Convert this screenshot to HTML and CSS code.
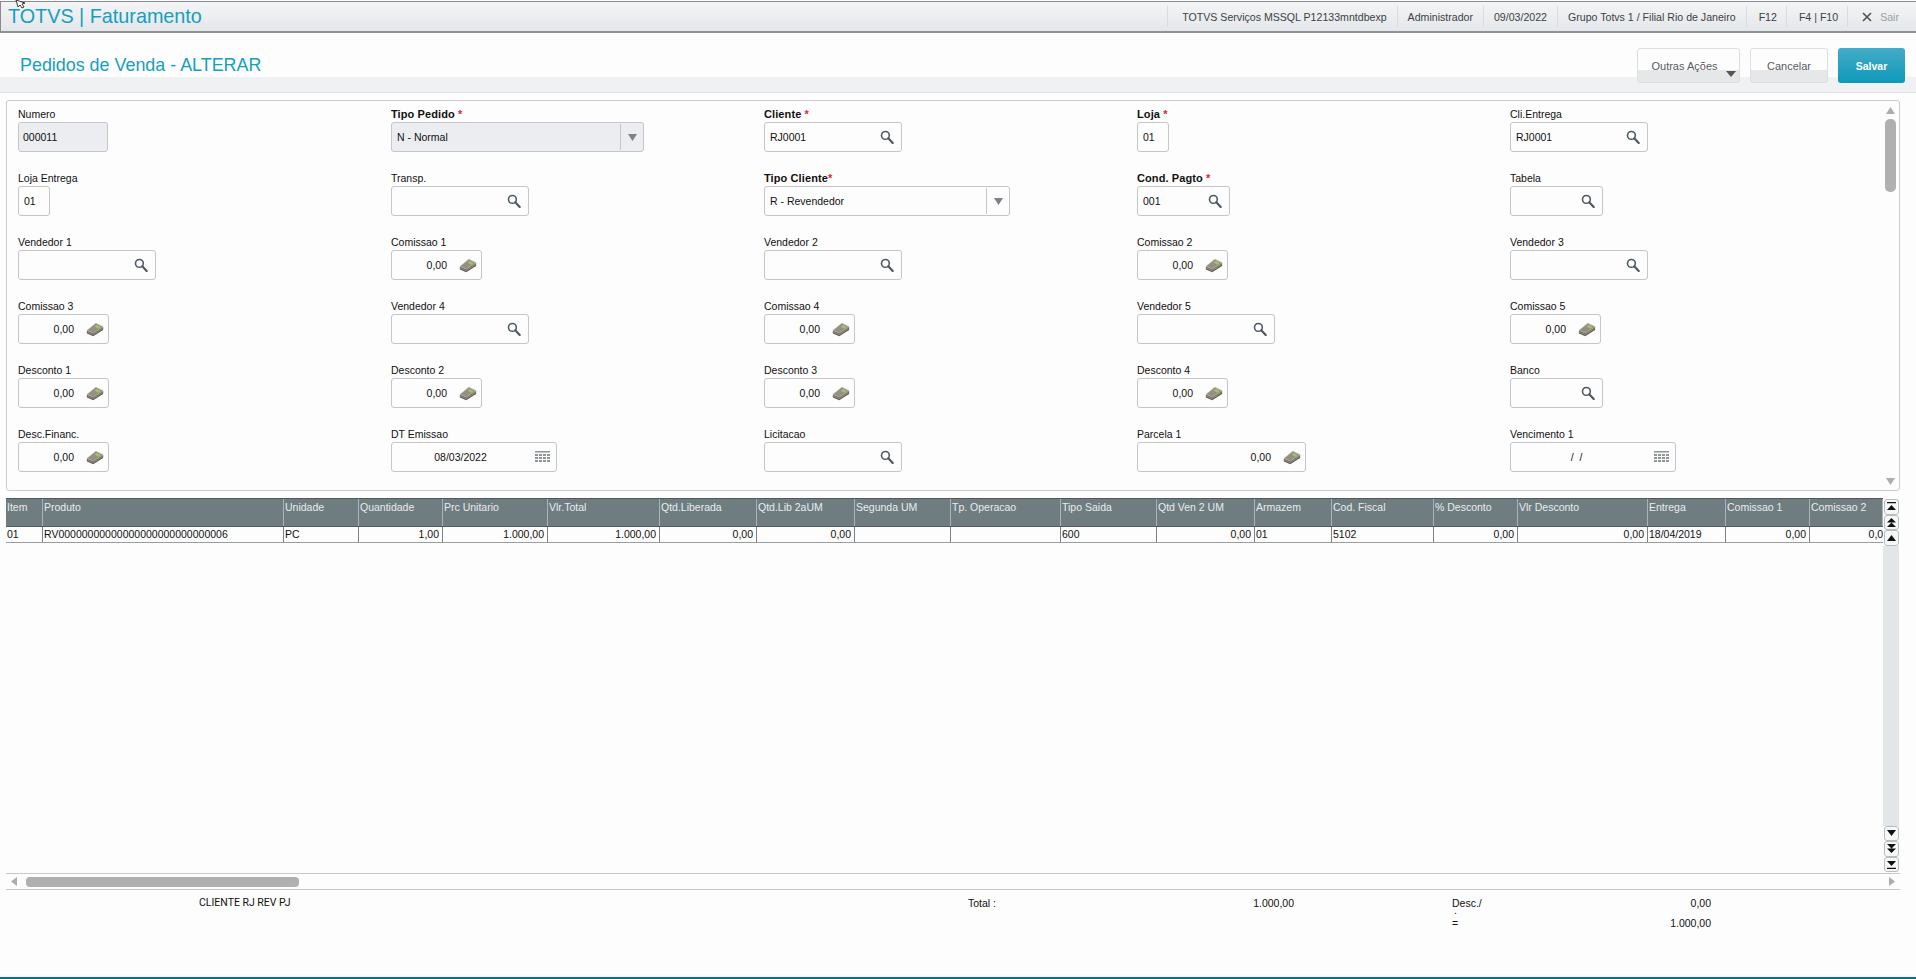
FILE: index.html
```html
<!DOCTYPE html>
<html lang="pt-BR">
<head>
<meta charset="utf-8">
<title>TOTVS | Faturamento</title>
<link rel="stylesheet" href="styles.css">
</head>
<body>
<svg class="defs" width="0" height="0" aria-hidden="true">
  <symbol id="i-search" viewBox="0 0 14 14">
    <circle cx="5.4" cy="5.4" r="3.9" fill="none" stroke="#4f5a66" stroke-width="1.6"/>
    <path d="M8.3 8.3l4.4 4.6" stroke="#4f5a66" stroke-width="2.2" stroke-linecap="round"/>
  </symbol>
  <symbol id="i-money" viewBox="0 0 20 16">
    <path d="M1 9L11 1l8 4v3.500L8 15.500 1 12.500z" fill="#5f5b53"/>
    <path d="M1 9L11 1l8 4L8 12z" fill="#968e80" stroke="#d2cdc2" stroke-width=".7"/>
    <path d="M9.500 4.800L12 2.800l4.200 2.200-2.500 2.100z" fill="#9cc46a"/>
    <path d="M1.500 11l6.500 2.700L18.500 7" fill="none" stroke="#a8a296" stroke-width=".8"/>
  </symbol>
  <symbol id="i-cal" viewBox="0 0 15 13">
    <path d="M0 0h15v1.500H0z" fill="#8f959b"/>
    <path d="M0 3h3v2H0zM4 3h3v2H4zM8 3h3v2H8zM12 3h3v2h-3zM0 6h3v2H0zM4 6h3v2H4zM8 6h3v2H8zM12 6h3v2h-3zM0 9h3v2H0zM4 9h3v2H4zM8 9h3v2H8zM12 9h3v2h-3z" fill="#8f959b"/>
  </symbol>
</svg>

<svg class="cursor" width="12" height="9" viewBox="0 0 12 9" aria-hidden="true"><path d="M1 0l2 7 2-2 2 3 2-1-2-3 3-1z" fill="#fff" stroke="#222" stroke-width=".9"/></svg>

<header class="topbar">
  <div class="brand">TOTVS | Faturamento</div>
  <nav class="topnav">
    <span class="topitem first">TOTVS Serviços MSSQL P12133mntdbexp</span>
    <span class="topitem">Administrador</span>
    <span class="topitem">09/03/2022</span>
    <span class="topitem">Grupo Totvs 1 / Filial Rio de Janeiro</span>
    <span class="topitem key">F12</span>
    <span class="topitem key">F4 | F10</span>
    <span class="topitem exit"><svg class="x" width="10" height="10" viewBox="0 0 10 10"><path d="M1 1l8 8M9 1L1 9" stroke="#555" stroke-width="1.7"/></svg>Sair</span>
  </nav>
</header>

<section class="titlebar">
  <h1 class="pagetitle">Pedidos de Venda - ALTERAR</h1>
  <div class="actions">
    <button class="btn btn-more">Outras Ações<svg class="caret" width="10" height="6" viewBox="0 0 10 6"><path d="M0 0h10L5 6z" fill="#555"/></svg></button>
    <button class="btn btn-cancel">Cancelar</button>
    <button class="btn btn-save">Salvar</button>
  </div>
</section>

<section class="panel">
  <div class="form">
    <div class="field"><span class="lbl">Numero</span><div class="box w-ro ro">000011</div></div>
    <div class="field"><span class="lbl req">Tipo Pedido <i>*</i></span><div class="box w-combo ro">N - Normal<span class="combo"><svg width="9" height="7" viewBox="0 0 9 7"><path d="M0 0h9L4.500 7z" fill="#7c8288"/></svg></span></div></div>
    <div class="field"><span class="lbl req">Cliente <i>*</i></span><div class="box w-l">RJ0001<svg class="ic-s"><use href="#i-search"/></svg></div></div>
    <div class="field"><span class="lbl req">Loja <i>*</i></span><div class="box w-xs">01</div></div>
    <div class="field"><span class="lbl">Cli.Entrega</span><div class="box w-l">RJ0001<svg class="ic-s"><use href="#i-search"/></svg></div></div>

    <div class="field"><span class="lbl">Loja Entrega</span><div class="box w-xs">01</div></div>
    <div class="field"><span class="lbl">Transp.</span><div class="box w-l"><svg class="ic-s"><use href="#i-search"/></svg></div></div>
    <div class="field"><span class="lbl req">Tipo Cliente<i>*</i></span><div class="box w-combo2">R - Revendedor<span class="combo"><svg width="9" height="7" viewBox="0 0 9 7"><path d="M0 0h9L4.500 7z" fill="#7c8288"/></svg></span></div></div>
    <div class="field"><span class="lbl req">Cond. Pagto <i>*</i></span><div class="box w-m">001<svg class="ic-s"><use href="#i-search"/></svg></div></div>
    <div class="field"><span class="lbl">Tabela</span><div class="box w-m"><svg class="ic-s"><use href="#i-search"/></svg></div></div>

    <div class="field"><span class="lbl">Vendedor 1</span><div class="box w-l"><svg class="ic-s"><use href="#i-search"/></svg></div></div>
    <div class="field"><span class="lbl">Comissao 1</span><div class="box w-s num">0,00<svg class="ic-m"><use href="#i-money"/></svg></div></div>
    <div class="field"><span class="lbl">Vendedor 2</span><div class="box w-l"><svg class="ic-s"><use href="#i-search"/></svg></div></div>
    <div class="field"><span class="lbl">Comissao 2</span><div class="box w-s num">0,00<svg class="ic-m"><use href="#i-money"/></svg></div></div>
    <div class="field"><span class="lbl">Vendedor 3</span><div class="box w-l"><svg class="ic-s"><use href="#i-search"/></svg></div></div>

    <div class="field"><span class="lbl">Comissao 3</span><div class="box w-s num">0,00<svg class="ic-m"><use href="#i-money"/></svg></div></div>
    <div class="field"><span class="lbl">Vendedor 4</span><div class="box w-l"><svg class="ic-s"><use href="#i-search"/></svg></div></div>
    <div class="field"><span class="lbl">Comissao 4</span><div class="box w-s num">0,00<svg class="ic-m"><use href="#i-money"/></svg></div></div>
    <div class="field"><span class="lbl">Vendedor 5</span><div class="box w-l"><svg class="ic-s"><use href="#i-search"/></svg></div></div>
    <div class="field"><span class="lbl">Comissao 5</span><div class="box w-s num">0,00<svg class="ic-m"><use href="#i-money"/></svg></div></div>

    <div class="field"><span class="lbl">Desconto 1</span><div class="box w-s num">0,00<svg class="ic-m"><use href="#i-money"/></svg></div></div>
    <div class="field"><span class="lbl">Desconto 2</span><div class="box w-s num">0,00<svg class="ic-m"><use href="#i-money"/></svg></div></div>
    <div class="field"><span class="lbl">Desconto 3</span><div class="box w-s num">0,00<svg class="ic-m"><use href="#i-money"/></svg></div></div>
    <div class="field"><span class="lbl">Desconto 4</span><div class="box w-s num">0,00<svg class="ic-m"><use href="#i-money"/></svg></div></div>
    <div class="field"><span class="lbl">Banco</span><div class="box w-m"><svg class="ic-s"><use href="#i-search"/></svg></div></div>

    <div class="field"><span class="lbl">Desc.Financ.</span><div class="box w-s num">0,00<svg class="ic-m"><use href="#i-money"/></svg></div></div>
    <div class="field"><span class="lbl">DT Emissao</span><div class="box w-date date"><span class="dateval">08/03/2022</span><svg class="ic-c"><use href="#i-cal"/></svg></div></div>
    <div class="field"><span class="lbl">Licitacao</span><div class="box w-l"><svg class="ic-s"><use href="#i-search"/></svg></div></div>
    <div class="field"><span class="lbl">Parcela 1</span><div class="box w-xl num">0,00<svg class="ic-m"><use href="#i-money"/></svg></div></div>
    <div class="field"><span class="lbl">Vencimento 1</span><div class="box w-date date"><span class="dateval">/&nbsp;&nbsp;/&nbsp;&nbsp;</span><svg class="ic-c"><use href="#i-cal"/></svg></div></div>
  </div>
  <div class="panelscroll">
    <svg width="9" height="7" viewBox="0 0 9 7"><path d="M0 7h9L4.500 0z" fill="#a9adb1"/></svg>
    <div class="pthumb"></div>
    <div class="pspace"></div>
    <svg width="9" height="7" viewBox="0 0 9 7"><path d="M0 0h9L4.500 7z" fill="#a9adb1"/></svg>
  </div>
</section>

<section class="gridwrap">
  <div class="gridmain">
    <div class="grow ghead">
      <span>Item</span><span>Produto</span><span>Unidade</span><span>Quantidade</span><span>Prc Unitario</span><span>Vlr.Total</span><span>Qtd.Liberada</span><span>Qtd.Lib 2aUM</span><span>Segunda UM</span><span>Tp. Operacao</span><span>Tipo Saida</span><span>Qtd Ven 2 UM</span><span>Armazem</span><span>Cod. Fiscal</span><span>% Desconto</span><span>Vlr Desconto</span><span>Entrega</span><span>Comissao 1</span><span>Comissao 2</span>
    </div>
    <div class="grow gbody">
      <span>01</span><span>RV00000000000000000000000000006</span><span>PC</span><span class="r">1,00</span><span class="r">1.000,00</span><span class="r">1.000,00</span><span class="r">0,00</span><span class="r">0,00</span><span></span><span></span><span>600</span><span class="r">0,00</span><span>01</span><span>5102</span><span class="r">0,00</span><span class="r">0,00</span><span>18/04/2019</span><span class="r">0,00</span><span class="r clip"><b>0,00</b></span>
    </div>
  </div>
  <div class="gridside">
    <button class="sbtn"><svg width="9" height="9" viewBox="0 0 9 9"><path d="M0 0h9v1.300H0zM0 8h9L4.500 3z" fill="#111"/></svg></button>
    <button class="sbtn"><svg width="9" height="9" viewBox="0 0 9 9"><path d="M0 4.500h9L4.500 0zM0 9h9L4.500 4.500z" fill="#111"/></svg></button>
    <button class="sbtn"><svg width="9" height="6" viewBox="0 0 9 6"><path d="M0 6h9L4.500 0z" fill="#111"/></svg></button>
    <div class="strack"></div>
    <button class="sbtn"><svg width="9" height="6" viewBox="0 0 9 6"><path d="M0 0h9L4.500 6z" fill="#111"/></svg></button>
    <button class="sbtn"><svg width="9" height="9" viewBox="0 0 9 9"><path d="M0 0h9L4.500 4.500zM0 4.500h9L4.500 9z" fill="#111"/></svg></button>
    <button class="sbtn"><svg width="9" height="9" viewBox="0 0 9 9"><path d="M0 1h9L4.500 6zM0 7.700h9V9H0z" fill="#111"/></svg></button>
  </div>
</section>

<div class="hbar">
  <svg class="harrow" width="6" height="9" viewBox="0 0 6 9"><path d="M6 0v9L0 4.500z" fill="#a9adb1"/></svg>
  <div class="hthumb"></div>
  <svg class="harrow-r" width="6" height="9" viewBox="0 0 6 9"><path d="M0 0v9l6-4.500z" fill="#a9adb1"/></svg>
</div>

<footer class="totals">
  <span class="t-name">CLIENTE RJ REV PJ</span>
  <span class="t-label">Total :</span>
  <span class="t-val">1.000,00</span>
  <span class="t-label2">Desc./</span>
  <span class="t-val2">0,00</span>
  <span class="t-dot">.</span>
  <span class="t-eq">=</span>
  <span class="t-val3">1.000,00</span>
</footer>

<div class="bottomline"></div>
</body>
</html>
```

FILE: styles.css
```css
* { box-sizing: border-box; }
html, body { margin: 0; padding: 0; }
body {
  width: 1916px;
  height: 979px;
  overflow: hidden;
  background: #fdfdfd;
  color: #111;
  font-family: "Liberation Sans", Arial, sans-serif;
  font-size: 10.500px;
  display: flex;
  flex-direction: column;
  position: relative;
}
.defs { position: absolute; }
.cursor { position: absolute; left: 15px; top: 0; z-index: 5; }

/* top bar */
.topbar {
  height: 32px;
  margin-top: 1px;
  flex: none;
  display: flex;
  align-items: center;
  justify-content: space-between;
  border: 1px solid #888c90;
  border-right: 0;
  border-bottom: 2px solid #8e9296;
  background: linear-gradient(#f3f4f5, #e4e7ea);
}
.brand {
  font-size: 19.800px;
  color: #149fc0;
  padding-left: 7px;
}
.topnav { display: flex; height: 21px; align-items: stretch; padding-right: 17px; }
.topitem {
  display: flex;
  align-items: center;
  padding: 0 10px;
  border-left: 1px solid #d9dcdf;
  font-size: 10.600px;
  color: #3c4247;
  white-space: nowrap;
}
.topitem.first { padding-left: 14px; }
.topitem.key { padding: 0 9px 0 12px; }
.exit { padding: 0 0 0 14px; color: #9a9fa4; }
.x { margin-right: 8px; }

/* title */
.titlebar {
  height: 60px;
  flex: none;
  display: flex;
  justify-content: space-between;
  background: linear-gradient(#fdfdfd 44px, #f0f1f3 44px);
  border-bottom: 1px solid #dfe1e3;
}
.pagetitle {
  margin: 21px 0 0 20px;
  font-size: 17.900px;
  font-weight: 400;
  color: #149fc0;
  line-height: 22px;
}
.actions { display: flex; gap: 10px; padding: 15px 11px 0 0; align-items: flex-start; }
.btn {
  height: 35px;
  border: 1px solid #dcdee0;
  border-radius: 3px;
  background: linear-gradient(#fdfdfd 21px, #e5e7e9 21px);
  color: #555b60;
  font: 11px "Liberation Sans", Arial, sans-serif;
  padding: 0;
  position: relative;
}
.btn-more { width: 103px; padding-right: 8px; }
.btn-cancel { width: 78px; }
.btn-save {
  width: 67px;
  border: 0;
  background: linear-gradient(#45abc6, #0d99ba);
  color: #fff;
  font-weight: 700;
  font-size: 10.500px;
}
.caret { position: absolute; right: 3px; bottom: 5px; }

/* form */
.panel {
  flex: none;
  width: 1894px;
  height: 391px;
  margin: 7px 0 7px 6px;
  border: 1px solid #c9cbcd;
  border-radius: 3px;
  display: flex;
  justify-content: space-between;
}
.form {
  display: grid;
  grid-template-columns: repeat(5, 373px);
  grid-auto-rows: 64px;
  padding: 5px 0 0 11px;
}
.field { display: flex; flex-direction: column; }
.lbl { height: 16px; line-height: 17.500px; color: #111; white-space: nowrap; }
.req { font-weight: 700; font-size: 11px; letter-spacing: .1px; }
.req i { color: #e0232e; font-style: normal; }
.box {
  height: 30px;
  border: 1px solid #c4c6c8;
  border-radius: 3px;
  background: #fdfdfd;
  display: flex;
  align-items: center;
  padding-left: 5px;
  position: relative;
  color: #111;
}
.ro { background: #ebedf0; }
.w-xs { width: 32px; }
.w-ro { width: 90px; padding-left: 4px; }
.w-s { width: 91px; }
.w-m { width: 93px; }
.w-l { width: 138px; }
.w-xl { width: 169px; }
.w-date { width: 166px; }
.w-combo { width: 253px; }
.w-combo2 { width: 246px; }
.num { justify-content: flex-end; padding-right: 34px; }
.ic-s { position: absolute; right: 7px; top: 7px; width: 14px; height: 14px; }
.ic-m { position: absolute; right: 4px; top: 7px; width: 18px; height: 15px; }
.ic-c { position: absolute; right: 6px; top: 8px; width: 15px; height: 13px; }
.combo {
  position: absolute;
  right: 0; top: 1px; bottom: 1px;
  width: 23px;
  border-left: 1px solid #c4c6c8;
  display: flex;
  align-items: center;
  justify-content: center;
}
.date { justify-content: center; padding: 0 27px 0 0; }
.panelscroll {
  width: 14px;
  margin-right: 3px;
  padding: 6px 0 5px;
  display: flex;
  flex-direction: column;
  align-items: center;
  flex: none;
}
.pthumb { width: 11px; height: 73px; margin-top: 5px; border-radius: 5px; background: #b0b0b0; flex: none; }
.pspace { flex: 1; }

/* grid */
.gridwrap {
  flex: none;
  height: 375px;
  margin-left: 6px;
  display: flex;
}
.gridmain { width: 1877px; flex: none; }
.grow {
  display: grid;
  grid-template-columns: 37px 241px 75px 84px 105px 112px 97px 98px 96px 110px 96px 98px 77px 102px 84px 130px 78px 84px 73px;
}
.grow span { overflow: hidden; white-space: nowrap; }
.ghead {
  height: 29px;
  background: #6f7d81;
  border-top: 1px solid #4f5a5e;
  border-bottom: 1px solid #505b5f;
  color: #e8ecee;
}
.ghead span { padding: 1px 0 0 1px; line-height: 14px; border-right: 1px solid #a9b2b5; }
.gbody { height: 16px; border-bottom: 1px solid #9a9ea1; color: #111; }
.gbody span { padding-left: 1px; line-height: 15px; border-right: 1px solid #7c8184; }
.gbody .r { text-align: right; padding: 0 3px 0 0; }
.gbody .clip { display: flex; justify-content: flex-end; padding: 0; border-right: 0; }
.clip b { font-weight: 400; flex: none; margin-right: -6px; }
.gridside { width: 16px; margin-top: 1px; padding-bottom: 1px; display: flex; flex-direction: column; flex: none; }
.sbtn {
  width: 15px;
  height: 15.500px;
  flex: none;
  margin-left: 1px;
  padding: 0;
  border: 1px solid #b9bcbf;
  border-radius: 3px;
  background: #f6f7f7;
  display: flex;
  align-items: center;
  justify-content: center;
}
.strack { flex: 1; background: #e3e6e9; }

.hbar {
  flex: none;
  height: 17px;
  width: 1894px;
  margin-left: 6px;
  border-top: 1px solid #c6c8ca;
  border-bottom: 1px solid #c6c8ca;
  display: flex;
  align-items: center;
  position: relative;
}
.harrow { margin-left: 5px; flex: none; }
.hthumb { width: 273px; height: 10px; margin-left: 9px; border-radius: 4px; background: #b0b0b0; flex: none; }
.harrow-r { margin-left: auto; margin-right: 5px; flex: none; }

/* totals */
.totals {
  flex: 1;
  display: grid;
  grid-template-columns: 769px 60px 266px 158px 40px 219px;
  grid-auto-rows: 10px;
  padding: 8px 0 0 199px;
  line-height: 10px;
  white-space: nowrap;
}
.t-name { font-family: Roboto, "Liberation Sans", sans-serif; font-size: 10.500px; }
.t-val, .t-val2, .t-val3 { text-align: right; }
.t-label2 { grid-column: 5; }
.t-dot { grid-column: 5; grid-row: 2; line-height: 4px; padding-left: 2px; }
.t-eq { grid-column: 5; grid-row: 3; }
.t-val3 { grid-column: 6; grid-row: 3; }
.bottomline { height: 2px; background: #0d7189; flex: none; }
```
